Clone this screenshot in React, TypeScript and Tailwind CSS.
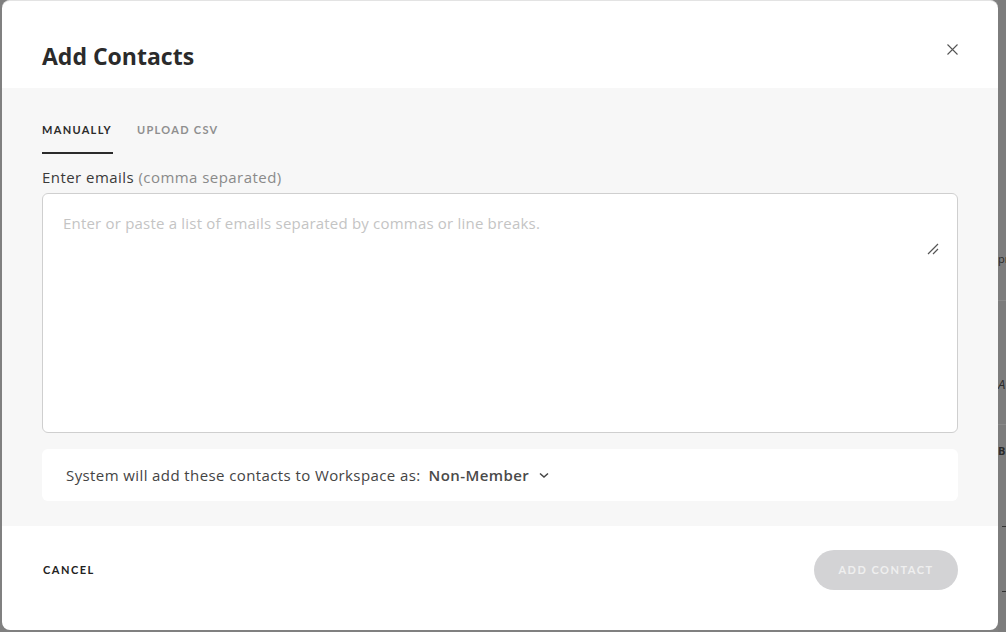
import React from "react";

export default function App() {
  const lato = { fontFamily: "Lato, 'Noto Sans', sans-serif" };
  const open = { fontFamily: "'Open Sans', 'Noto Sans', sans-serif" };
  return (
    <div className="w-[1006px] h-[632px] bg-[#808080] relative overflow-hidden" style={open}>
      {/* background page fragments peeking on the right */}
      <div className="absolute left-[998px] top-0 w-[8px] h-[632px] bg-[#7d7d7d] overflow-hidden">
        <div className="absolute top-[252px] left-0 text-[11px] leading-[14px] text-[#2a2a2a] whitespace-nowrap">pr</div>
        <div className="absolute top-[300px] left-0 w-[8px] h-px bg-[#8a8a8a]" />
        <div className="absolute top-[376px] left-0 text-[13px] leading-[16px] italic text-[#2a2a2a]">A</div>
        <div className="absolute top-[424px] left-0 w-[8px] h-px bg-[#8a8a8a]" />
        <div className="absolute top-[444px] left-0 text-[11px] leading-[14px] font-bold text-[#2a2a2a] whitespace-nowrap">BI</div>
        <div className="absolute top-[526px] left-[4px] w-[4px] h-px bg-[#333]" />
        <div className="absolute top-[591px] left-[4px] w-[4px] h-px bg-[#333]" />
      </div>
      <div className="absolute left-[2px] top-0 w-[996px] h-[630px] bg-white rounded-[8px] border-t border-[#e3e3e3] flex flex-col overflow-hidden">
        {/* header */}
        <div className="h-[87px] flex items-start justify-between pl-[40px] pr-[36px] pt-[40px] shrink-0">
          <h1 className="text-[23px] leading-[30px] font-bold text-[#2b2b2b]">Add Contacts</h1>
          <button className="-mt-[2px] w-[20px] h-[20px] flex items-center justify-center">
            <svg width="11" height="11" viewBox="0 0 11 11" fill="none" stroke="#555" strokeWidth="1.1">
              <path d="M0.5 0.5L10.5 10.5M10.5 0.5L0.5 10.5" />
            </svg>
          </button>
        </div>
        {/* body */}
        <div className="flex-1 bg-[#f7f7f7] px-[40px] pt-[34px] pb-[24px] flex flex-col">
          <div className="flex gap-[24px] text-[11px] font-bold tracking-[1.3px] leading-[16px]" style={lato}>
            <div className="flex flex-col text-[#2b2b2b]">
              <span className="pb-[14px]">MANUALLY</span>
              <span className="h-[2px] bg-[#2b2b2b] w-[71px]" />
            </div>
            <span className="text-[#8f8f8f]">UPLOAD CSV</span>
          </div>
          <div className="mt-[13px] text-[15px] leading-[20px] tracking-[0.45px] text-[#3a3a3a]">
            Enter emails <span className="text-[#8a8a8a]">(comma separated)</span>
          </div>
          <div className="mt-[6px] h-[240px] bg-white border border-[#cfcfcf] rounded-[6px] relative px-[20px] pt-[19px]">
            <div className="text-[15px] leading-[20px] tracking-[0.2px] text-[#c4c4c4]">
              Enter or paste a list of emails separated by commas or line breaks.
            </div>
            <svg className="absolute left-[884px] top-[49px]" width="12" height="12" viewBox="0 0 12 12" stroke="#555" strokeWidth="1.2" fill="none">
              <path d="M1 11L11 1M6 11L11 6" />
            </svg>
          </div>
          <div className="mt-[16px] h-[52px] bg-white rounded-[6px] flex items-center px-[24px] text-[15px] tracking-[0.4px] text-[#444]">
            <span>System will add these contacts to Workspace as:</span>
            <span className="ml-[8px] font-semibold text-[#4a4a4a]">Non-Member</span>
            <svg className="ml-[9px]" width="12" height="12" viewBox="0 0 12 12" fill="none" stroke="#444" strokeWidth="1.5">
              <path d="M2 4.5L6 8L10 4.5" />
            </svg>
          </div>
        </div>
        {/* footer */}
        <div className="h-[104px] shrink-0 flex items-start justify-between pl-[41px] pr-[40px] pt-[24px]" style={lato}>
          <span className="h-[40px] flex items-center text-[11px] font-bold tracking-[1.5px] text-[#222]">CANCEL</span>
          <button className="w-[144px] h-[40px] rounded-full bg-[#d3d3d5] text-[#efefef] text-[11px] font-bold tracking-[1.5px]">
            ADD CONTACT
          </button>
        </div>
      </div>
    </div>
  );
}
